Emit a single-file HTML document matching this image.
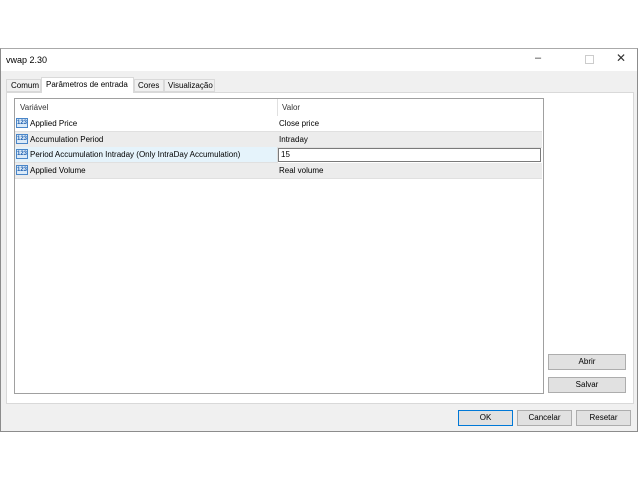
<!DOCTYPE html>
<html><head><style>
body{margin:0;width:640px;height:480px;background:#fff;position:relative;font-family:"Liberation Sans",sans-serif;font-size:8px;color:#000;overflow:hidden}
.a{position:absolute;box-sizing:border-box;white-space:nowrap}
.btn{position:absolute;box-sizing:border-box;background:#e1e1e1;border:1px solid #adadad;text-align:center;line-height:14px;font-size:8px}
.ic{position:absolute;left:1px;width:12px;height:10px;background:#dbeaf8;border:1px solid #4a86c8;box-sizing:border-box;font-size:6px;line-height:8px;color:#1d5fb0;text-align:center;font-weight:bold}
.row{position:absolute;left:0;width:527px;height:15px;line-height:15px;border-bottom:1px solid #e0e0e0;white-space:nowrap}
.row .n{position:absolute;left:15px}
.row .v{position:absolute;left:264px}
</style></head><body>
<div class="a" style="left:0;top:48px;width:638px;height:384px;background:#f0f0f0;border:1px solid #8c8c8c;border-top-color:#aaa">
 <div class="a" style="left:0;top:0;width:636px;height:22px;background:#fff"></div>
 <div class="a" style="left:5px;top:6px;font-size:9px">vwap 2.30</div>
 <div class="a" style="left:534px;top:3px;font-size:11px;color:#333">&#8211;</div>
 <div class="a" style="left:584px;top:6px;width:9px;height:9px;border:1px solid #ccc"></div>
 <div class="a" style="left:615px;top:2px;font-size:12px;color:#333">&#10005;</div>
 <div class="a" style="left:5px;top:30px;width:35px;height:13px;border:1px solid #d9d9d9;background:#f0f0f0;line-height:12px;padding-left:4px">Comum</div>
 <div class="a" style="left:40px;top:28px;width:93px;height:16px;border:1px solid #d9d9d9;border-bottom:none;background:#fff;line-height:14px;padding-left:4px;z-index:2">Parâmetros de entrada</div>
 <div class="a" style="left:133px;top:30px;width:30px;height:13px;border:1px solid #d9d9d9;background:#f0f0f0;line-height:12px;padding-left:3px">Cores</div>
 <div class="a" style="left:163px;top:30px;width:51px;height:13px;border:1px solid #d9d9d9;background:#f0f0f0;line-height:12px;padding-left:3px">Visualização</div>
 <div class="a" style="left:5px;top:43px;width:628px;height:312px;background:#fff;border:1px solid #d9d9d9"></div>
 <div class="a" style="left:13px;top:49px;width:530px;height:296px;background:#fff;border:1px solid #a0a0a0">
  <div class="a" style="left:0;top:0;width:527px;height:17px;line-height:17px"><span style="position:absolute;left:5px;color:#333">Variável</span><span style="position:absolute;left:267px;color:#333">Valor</span></div>
  <div class="a" style="left:262px;top:0;width:1px;height:80px;background:#e0e0e0"></div>
  <div class="row" style="top:17px;background:#fff"><div class="ic" style="top:2px">123</div><span class="n">Applied Price</span><span class="v">Close price</span></div>
  <div class="row" style="top:33px;background:#ececec"><div class="ic" style="top:2px">123</div><span class="n">Accumulation Period</span><span class="v">Intraday</span></div>
  <div class="row" style="top:48px;background:#e5f3fb;width:262px"><div class="ic" style="top:2px">123</div><span class="n">Period Accumulation Intraday (Only IntraDay Accumulation)</span></div>
  <div class="a" style="left:263px;top:49px;width:263px;height:14px;border:1px solid #7a7a7a;background:#fff;line-height:12px;padding-left:2px">15</div>
  <div class="row" style="top:64px;background:#ececec"><div class="ic" style="top:2px">123</div><span class="n">Applied Volume</span><span class="v">Real volume</span></div>
 </div>
 <div class="btn" style="left:547px;top:305px;width:78px;height:16px">Abrir</div>
 <div class="btn" style="left:547px;top:328px;width:78px;height:16px">Salvar</div>
 <div class="btn" style="left:457px;top:361px;width:55px;height:16px;border:1px solid #0078d7">OK</div>
 <div class="btn" style="left:516px;top:361px;width:55px;height:16px">Cancelar</div>
 <div class="btn" style="left:575px;top:361px;width:55px;height:16px">Resetar</div>
</div>
</body></html>
